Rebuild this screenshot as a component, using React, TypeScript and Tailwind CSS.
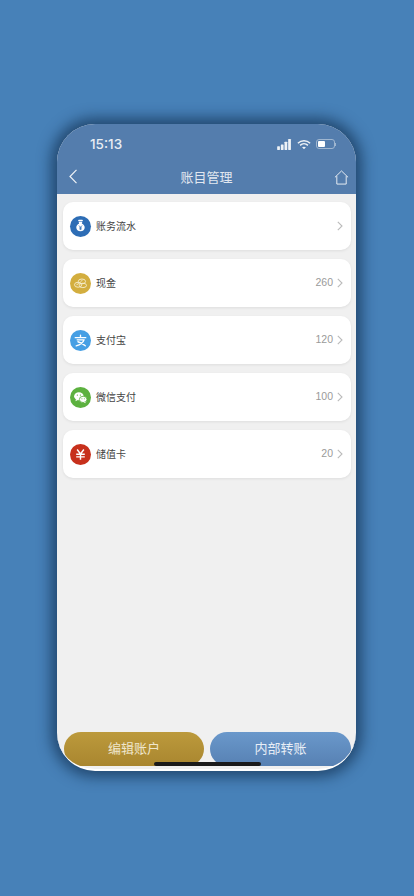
import type { ReactNode } from "react";

const zh = "font-['Liberation_Sans','Noto_Sans_CJK_SC',sans-serif]";

function MoneyBag() {
    return (
        <svg viewBox="0 0 22 22" className="w-[21px] h-[21px]">
            <rect x="8.500" y="4" width="5" height="1.600" rx=".8" fill="#fff" />
            <path d="M9 6h4l-.6 1.800c1.900.8 3 2.500 3 4.200 0 2.500-1.800 4-4.400 4s-4.400-1.500-4.400-4c0-1.700 1.100-3.400 3-4.200z" fill="#fff" />
            <path d="M9.400 10l1.600 1.800L12.600 10M11 11.800v2.700M9.700 12.400h2.600M9.700 13.600h2.600" stroke="#2d6db5" strokeWidth=".8" fill="none" />
        </svg>
    );
}

function Coins() {
    return (
        <svg viewBox="0 0 22 22" className="w-[21px] h-[21px]" fill="none" stroke="#f5ebc8" strokeWidth="1">
            <ellipse cx="12.500" cy="8.800" rx="3.800" ry="2.500" />
            <ellipse cx="8.500" cy="12.300" rx="3.800" ry="2.600" />
            <ellipse cx="13.500" cy="13" rx="3.800" ry="2.300" />
            <path d="M6.800 12.300l2.600-1.300M11 8.800l2-1" />
        </svg>
    );
}

function Alipay() {
    return (
        <svg viewBox="0 0 22 22" className="w-[21px] h-[21px]" fill="none" stroke="#fff" strokeWidth="1.400" strokeLinecap="round">
            <path d="M5.500 8h11M11 5.500V8M14.800 10.300H7.500M14.800 10.300c-1.300 3.400-4.300 5.400-8.300 6.400M8.300 12.300c2.800.8 5.300 2.200 7.700 4.200" />
        </svg>
    );
}

function Wechat() {
    return (
        <svg viewBox="0 0 22 22" className="w-[21px] h-[21px]">
            <ellipse cx="9.300" cy="9.700" rx="5" ry="4.200" fill="#fff" />
            <path d="M6.300 12.700l-.6 2.100 2.500-1.200z" fill="#fff" />
            <ellipse cx="13.800" cy="13" rx="4" ry="3.300" fill="#fff" stroke="#5cb13f" strokeWidth=".9" />
            <path d="M15.800 15.500l.7 1.500-2.100-.9z" fill="#fff" />
            <circle cx="7.700" cy="8.500" r=".7" fill="#5cb13f" />
            <circle cx="10.900" cy="8.500" r=".7" fill="#5cb13f" />
            <circle cx="12.500" cy="12.300" r=".55" fill="#5cb13f" />
            <circle cx="15" cy="12.300" r=".55" fill="#5cb13f" />
        </svg>
    );
}

function Yen() {
    return (
        <svg viewBox="0 0 22 22" className="w-[21px] h-[21px]" fill="none" stroke="#fff" strokeWidth="1.500">
            <path d="M7.500 5.800L11 10.500l3.500-4.700M11 10.500V16.500M6.500 10.800h9M6.500 13.500h9" />
        </svg>
    );
}

const rows: { name: string; value?: string; color: string; icon: ReactNode }[] = [
    { name: "账务流水", color: "bg-[#2d6db5]", icon: <MoneyBag /> },
    { name: "现金", value: "260", color: "bg-[#d3ae3f]", icon: <Coins /> },
    { name: "支付宝", value: "120", color: "bg-[#469fe4]", icon: <Alipay /> },
    { name: "微信支付", value: "100", color: "bg-[#5cb13f]", icon: <Wechat /> },
    { name: "储值卡", value: "20", color: "bg-[#c7301c]", icon: <Yen /> },
];

export default function App() {
    return (
        <div className={`w-[414px] h-[896px] bg-[#4781b8] flex items-center justify-center overflow-hidden pr-[1px] pb-[1px] ${zh}`}>
            <div className="w-[299px] h-[647px] rounded-[38px] bg-[#f0f0f0] overflow-hidden flex flex-col relative shadow-[0_0_14px_6px_rgba(10,35,65,0.6)] border-b-2 border-white">
                {/* Status bar */}
                <div className="h-[70px] shrink-0 bg-[#547dad] flex flex-col text-white">
                    <div className="flex items-center justify-between pl-[33px] pr-[20px] pt-[10px]">
                        <span className="text-[13.500px] font-medium text-[#e8edf3] font-['Inter',sans-serif] leading-[20px]">15:13</span>
                        <div className="flex items-center gap-[5px]">
                            <svg viewBox="0 0 16 12" className="w-[15px] h-[11px]" fill="#eef2f6">
                                <rect x="0" y="8" width="3" height="4" rx=".5" />
                                <rect x="4" y="6" width="3" height="6" rx=".5" />
                                <rect x="8" y="3" width="3" height="9" rx=".5" />
                                <rect x="12" y="0" width="3" height="12" rx=".5" />
                            </svg>
                            <svg viewBox="0 0 16 12" className="w-[14px] h-[11px]" fill="none" stroke="#eef2f6" strokeWidth="1.700">
                                <path d="M1 4.500c4-3.800 10-3.800 14 0M3.500 7c2.600-2.400 6.400-2.400 9 0" />
                                <path d="M5.800 9.200L8 11.500l2.200-2.300c-1.300-1-3.100-1-4.400 0z" fill="#eef2f6" stroke="none" />
                            </svg>
                            <div className="flex items-center">
                                <div className="w-[19px] h-[10px] rounded-[3px] border border-[#9fb6d0] p-[1px] flex">
                                    <div className="w-[7px] bg-white rounded-[1px]" />
                                </div>
                                <div className="w-[1px] h-[3px] bg-[#9fb6d0]" />
                            </div>
                        </div>
                    </div>
                    <div className="flex-1 relative flex items-center justify-center pt-[8px]">
                        <svg viewBox="0 0 8 15" className="absolute left-[12px] top-[15px] w-[8px] h-[15px]" fill="none" stroke="#eef2f6" strokeWidth="1.200">
                            <path d="M7.500 .8L1 7.500l6.500 6.700" />
                        </svg>
                        <span className="text-[13px] text-[#e2e8f0]">账目管理</span>
                        <svg viewBox="0 0 16 16" className="absolute right-[7px] top-[16px] w-[15px] h-[15px]" fill="none" stroke="#eef2f6" strokeWidth="1">
                            <path d="M1 7.800L8 1l7 6.800M3 6.500V15h10V6.500" />
                        </svg>
                    </div>
                </div>

                {/* Account rows */}
                <div className="flex-1 flex flex-col gap-[9px] pl-[6px] pr-[5px] pt-[8px]">
                    {rows.map((row) => (
                        <div key={row.name} className="h-[48px] bg-white rounded-[10px] shadow-[0_1px_3px_rgba(0,0,0,0.08)] flex items-center pl-[7px] pr-[8px]">
                            <div className={`w-[21px] h-[21px] rounded-full flex items-center justify-center ${row.color}`}>
                                {row.icon}
                            </div>
                            <span className="ml-[5px] text-[10px] text-[#444]">{row.name}</span>
                            <span className="ml-auto text-[10.500px] text-[#9a9a9a]">{row.value}</span>
                            <svg viewBox="0 0 6 10" className="ml-[4px] w-[6px] h-[10px]" fill="none" stroke="#bbb" strokeWidth="1.100">
                                <path d="M.8 .8L5 5 .8 9.200" />
                            </svg>
                        </div>
                    ))}
                </div>

                {/* Bottom buttons */}
                <div className="flex gap-[6px] pl-[7px] pr-[5px] pb-[3px]">
                    <button className="w-[140px] h-[34px] rounded-full bg-gradient-to-b from-[#bc9a3c] to-[#a9862f] text-[13px] text-[#efe6cc]">
                        编辑账户
                    </button>
                    <button className="w-[141px] h-[34px] rounded-full bg-gradient-to-b from-[#6a98cb] to-[#5781b3] text-[13px] text-[#e8eef6]">
                        内部转账
                    </button>
                </div>
                <div className="absolute left-[97px] bottom-[3px] w-[107px] h-[4px] rounded-full bg-[#1a1a1a]" />
            </div>
        </div>
    );
}
